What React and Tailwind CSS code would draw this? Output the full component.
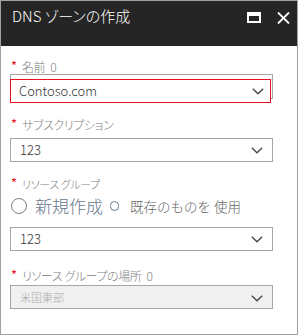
import React from 'react'

const font = "font-['Noto_Sans_CJK_JP','Noto_Sans',sans-serif]"

const Chevron = ({ className = '' }) => (
  <svg width="12" height="7" viewBox="0 0 12 7" className={className}>
    <path d="M0.8 0.8 L6 5.8 L11.2 0.8" fill="none" stroke="#444" strokeWidth="1.3" />
  </svg>
)

const Label = ({ children, className = '' }) => (
  <div className={`flex items-start h-[14px] leading-[14px] ${className}`}>
    <span className="text-[#e81123] text-[13px] leading-[12px] w-[12px] pl-[1px]">*</span>
    <span className="text-[12px] font-light text-[#808080] [font-feature-settings:'palt'] tracking-[-0.4px]">{children}</span>
  </div>
)

const Zero = () => <span className="ml-[5px]">0</span>

const Select = ({ value, className = '', disabled = false }) => (
  <div
    className={`w-[263px] h-[24px] border flex items-center justify-between pl-[9px] pr-[9px] ${
      disabled ? 'bg-[#f0f0f0] border-[#a6a6a6]' : 'bg-white border-[#a6a6a6]'
    } ${className}`}
  >
    <span
      className={
        disabled
          ? 'text-[11px] font-light text-[#aaa] self-start mt-[3px]'
          : 'text-[13px] font-light text-[#333]'
      }
    >
      {value}
    </span>
    <Chevron className={disabled ? 'mt-[3px]' : ''} />
  </div>
)

export default function App() {
  return (
    <div className={`w-[298px] h-[335px] border border-[#a0a0a0] bg-white overflow-hidden ${font}`}>
      <div className="h-[45px] bg-[#252525] flex items-start justify-between">
        <div className="text-white font-light text-[15px] leading-[18px] pl-[11px] pt-[6px] [font-feature-settings:'palt']">
          DNS ゾーンの作成
        </div>
        <div className="flex items-start pt-[10px] pr-[7px] gap-[16px]">
          <div className="w-[14px] h-[11px] border-2 border-t-4 border-white mt-[1px]" />
          <svg width="13" height="12" viewBox="0 0 13 12" className="mt-[1px]">
            <path d="M1 0.5 L12 11.5 M12 0.5 L1 11.5" stroke="#fff" strokeWidth="1.8" />
          </svg>
        </div>
      </div>

      <div className="pl-[9px]">
        <Label className="mt-[14px]">名前<Zero /></Label>
        <div className="relative mt-0 w-[263px] h-[25px] border border-[#a6a6a6]">
          <div className="absolute left-[-1px] top-[4px] w-[261px] h-[24px] border border-[#e81123] bg-white flex items-center justify-between pl-[8px] pr-[6px]">
            <span className="text-[13px] font-light text-[#333]">Contoso.com</span>
            <Chevron />
          </div>
        </div>

        <Label className="mt-[19px]">サブスクリプション</Label>
        <Select value="123" className="mt-[6px]" />

        <Label className="mt-[15px]">
          <span className="text-[11px]">リソース グループ</span>
        </Label>
        <div className="flex items-center h-[18px] mt-[6px]">
          <span className="w-[16px] h-[16px] rounded-full border-[1.5px] border-[#808080] ml-[1px]" />
          <span className="ml-[8px] text-[17px] font-light text-[#66788a] leading-[18px]">新規作成</span>
          <span className="ml-[7px] w-[9px] h-[10px] rounded-full border border-[#66788a]" />
          <span className="ml-[11px] text-[13.5px] font-light text-[#666] leading-[18px]">既存のものを 使用</span>
        </div>
        <Select value="123" className="mt-[12px]" />

        <Label className="mt-[18px]">リソース グループの場所<Zero /></Label>
        <Select value="米国東部" className="mt-[2px]" disabled />
      </div>
    </div>
  )
}
